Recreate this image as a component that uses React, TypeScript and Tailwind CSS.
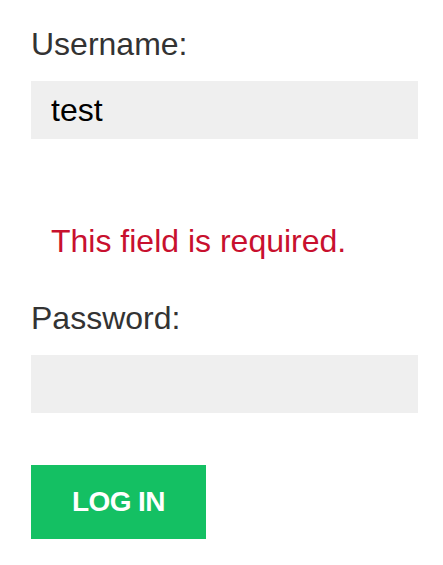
import React from "react";

export default function App() {
  return (
    <div
      className="w-[443px] h-[565px] bg-white pl-[31px] pt-[26px]"
      style={{ fontFamily: '"Liberation Sans", Arial, Helvetica, sans-serif' }}
    >
      <form className="w-[387px] flex flex-col" onSubmit={(e) => e.preventDefault()}>
        <label className="text-[32px] leading-[36px] text-[#333333]">Username:</label>
        <input
          className="mt-[19px] h-[58px] w-full bg-[#efefef] pl-[20px] text-[32px] text-black outline-none border-0"
          style={{ fontFamily: '"Liberation Sans", Arial, Helvetica, sans-serif' }}
          defaultValue="test"
        />
        <div className="mt-[84px] pl-[20px] text-[32px] leading-[36px] text-[#c8102e]">
          This field is required.
        </div>
        <label className="mt-[41px] text-[32px] leading-[36px] text-[#333333]">Password:</label>
        <input
          type="password"
          className="mt-[19px] h-[58px] w-full bg-[#efefef] pl-[20px] text-[32px] outline-none border-0"
        />
        <button
          type="submit"
          className="mt-[52px] h-[74px] w-[175px] bg-[#14c063] text-white font-bold text-[28px] tracking-[-0.6px]"
          style={{ fontFamily: '"Liberation Sans", Arial, Helvetica, sans-serif' }}
        >
          LOG IN
        </button>
      </form>
    </div>
  );
}
